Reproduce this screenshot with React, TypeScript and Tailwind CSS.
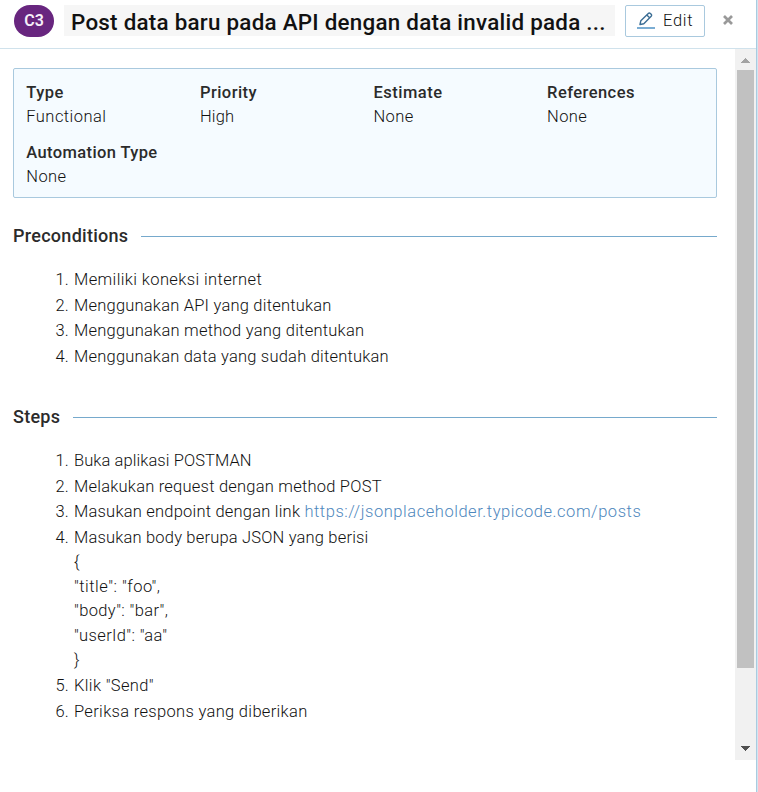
import type { ReactNode } from "react";

function Field({ label, value, labelClass, valueClass }: { label: string; value: string; labelClass: string; valueClass: string }) {
  return (
    <div className="h-12 whitespace-nowrap">
      <div className={`font-medium ${labelClass}`}>{label}</div>
      <div className={`font-light text-[#111] ${valueClass}`}>{value}</div>
    </div>
  );
}

function Heading({ children, className }: { children: ReactNode; className: string }) {
  return (
    <h2 className={`flex h-6 items-center text-[18px] leading-6 font-medium ${className}`}>
      {children}
      <span className="ml-[13px] mt-px h-px flex-1 bg-[#76a9cc]" />
    </h2>
  );
}

function Item({ n, children, className }: { n: number; children: ReactNode; className: string }) {
  return (
    <li className="flex h-[25.65px] whitespace-nowrap">
      <span className="w-[14px] text-right tracking-[0.2px]">{n}.</span>
      <span className={`ml-[5px] ${className}`}>{children}</span>
    </li>
  );
}

export default function App() {
  return (
    <div className="flex h-[792px] w-[758px] bg-white font-['Roboto',sans-serif] text-[#2b2b2b]">
      <div className="flex w-[756px] flex-col">
        <header className="flex h-[49px] shrink-0 items-start border-b border-[#d0e2ec] pt-[5px] pl-[14px]">
          <div className="flex h-8 w-10 items-center justify-center rounded-full bg-[#68267f] text-[16px] font-semibold text-[#f5eef8]">C3</div>
          <h1 className="ml-[10px] h-[31px] w-[551px] bg-[#f6f6f6] pl-[7px] text-[22.4px] leading-[35px] font-medium tracking-[0.25px] whitespace-nowrap text-[#111]">
            Post data baru pada API dengan data invalid pada ...
          </h1>
          <button className="ml-[10px] flex h-8 w-20 items-center rounded-[2px] border border-[#a9c9de] bg-white pl-[11px]">
            <svg width="18" height="18" viewBox="0 0 18 18" fill="none">
              <path d="M3 12.5 3.8 8.8 11.3 1.4a1.4 1.4 0 0 1 2 0l.9.9a1.4 1.4 0 0 1 0 2L6.8 11.7ZM9.8 3l2.8 2.8" stroke="#3b6d94" strokeWidth="1.4" strokeLinejoin="round" />
              <path d="M0 16h18" stroke="#7badd3" strokeWidth="2" />
            </svg>
            <span className="mt-px ml-[8px] text-[16.5px] font-light tracking-[0.7px] text-[#111]">Edit</span>
          </button>
          <svg className="mt-[10px] ml-[18px]" width="10" height="10" viewBox="0 0 10 10">
            <path d="m1 1 8 8M9 1 1 9" stroke="#999" strokeWidth="2.7" />
          </svg>
        </header>

        <div className="flex h-[711px] shrink-0">
          <main className="w-[735px] pt-[19px] pr-[18px] pl-[13px] text-[16.5px]">
            <section className="grid h-[130px] grid-cols-[173.6px_173.6px_173.6px_150px] content-start gap-y-3 rounded-[2px] border border-[#a9c9de] bg-[#f5fbff] pt-3 pl-[12.3px] leading-6">
              <Field label="Type" value="Functional" labelClass="tracking-[0.46px]" valueClass="tracking-[0.45px]" />
              <Field label="Priority" value="High" labelClass="tracking-[0.46px]" valueClass="tracking-[0.2px]" />
              <Field label="Estimate" value="None" labelClass="tracking-[0.5px]" valueClass="tracking-[0.4px]" />
              <Field label="References" value="None" labelClass="tracking-[0.45px]" valueClass="tracking-[0.4px]" />
              <Field label="Automation Type" value="None" labelClass="tracking-[0.38px]" valueClass="tracking-[0.4px]" />
            </section>

            <Heading className="mt-[26px] tracking-[0.28px]">Preconditions</Heading>
            <ol className="mt-[20.2px] ml-[42px] leading-[24.6px] font-light text-[#111]">
              <Item n={1} className="tracking-[0.38px]">Memiliki koneksi internet</Item>
              <Item n={2} className="tracking-[0.21px]">Menggunakan API yang ditentukan</Item>
              <Item n={3} className="tracking-[0.24px]">Menggunakan method yang ditentukan</Item>
              <Item n={4} className="tracking-[0.21px]">Menggunakan data yang sudah ditentukan</Item>
            </ol>

            <Heading className="mt-[34.2px] tracking-[0.25px]">Steps</Heading>
            <ol className="mt-5 ml-[42px] leading-[24.6px] font-light text-[#111]">
              <Item n={1} className="tracking-[0.08px]">Buka aplikasi POSTMAN</Item>
              <Item n={2} className="tracking-[0.22px]">Melakukan request dengan method POST</Item>
              <Item n={3} className="tracking-[0.21px]">
                Masukan endpoint dengan link <a className="tracking-[0.54px] text-[#4f88bd]">https://jsonplaceholder.typicode.com/posts</a>
              </Item>
              <Item n={4} className="tracking-[0.18px]">Masukan body berupa JSON yang berisi</Item>
              <li className="-mt-[1.4px] h-[123px] pl-[19px]">
                <div>{"{"}</div>
                <div className="tracking-[0.5px]">"title": "foo",</div>
                <div className="tracking-[0.38px]">"body": "bar",</div>
                <div className="tracking-[0.36px]">"userId": "aa"</div>
                <div>{"}"}</div>
              </li>
              <li className="h-[0.9px]" />
              <Item n={5} className="tracking-[0.35px]">Klik "Send"</Item>
              <Item n={6} className="tracking-[0.32px]">Periksa respons yang diberikan</Item>
            </ol>
          </main>

          <div className="flex w-[21px] flex-col items-center bg-[#f1f1f1]">
            <svg className="mt-[9px]" width="9" height="5" viewBox="0 0 9 5" shapeRendering="crispEdges"><path d="M0 5 4.5 0 9 5Z" fill="#a3a3a3" /></svg>
            <div className="mt-[7px] h-[598px] w-[17px] bg-[#c1c1c1]" />
            <svg className="mt-[78px]" width="9" height="5" viewBox="0 0 9 5" shapeRendering="crispEdges"><path d="M0 0h9L4.5 5Z" fill="#505050" /></svg>
          </div>
        </div>
      </div>
      <div className="w-px bg-[#a9cbe0]" />
      <div className="w-px bg-[#d3e5f0]" />
    </div>
  );
}
